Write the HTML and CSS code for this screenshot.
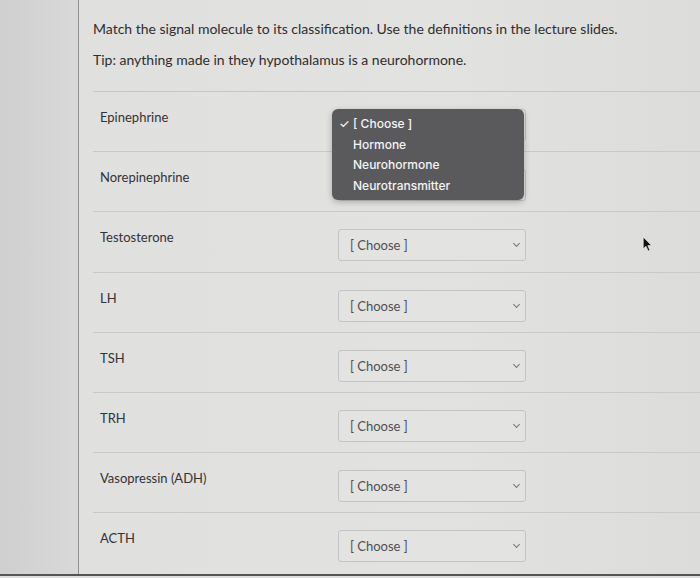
FILE: index.html
```html
<!DOCTYPE html>
<html>
<head>
<meta charset="utf-8">
<link rel="stylesheet" href="styles.css">
</head>
<body>
<div class="page">
  <aside class="sidebar"></aside>
  <main class="main">
    <div class="intro">
      <p class="line">Match the signal molecule to its classification. Use the definitions in the lecture slides.</p>
      <p class="line">Tip: anything made in they hypothalamus is a neurohormone.</p>
    </div>
    <div class="rows">
      <div class="row">
        <div class="label">Epinephrine</div>
        <div class="select-wrap">
          <div class="select"><span>[ Choose ]</span><span class="chev"></span></div>
          <ul class="menu">
            <li class="checked"><span class="check">✓</span>[ Choose ]</li>
            <li>Hormone</li>
            <li>Neurohormone</li>
            <li>Neurotransmitter</li>
          </ul>
        </div>
      </div>
      <div class="row">
        <div class="label">Norepinephrine</div>
        <div class="select-wrap"><div class="select"><span>[ Choose ]</span><span class="chev"></span></div></div>
      </div>
      <div class="row">
        <div class="label">Testosterone</div>
        <div class="select-wrap"><div class="select"><span>[ Choose ]</span><span class="chev"></span></div></div>
        <svg class="cursor" width="11" height="16" viewBox="0 0 10 15"><path d="M1 1 L1 12 L3.6 9.6 L5.6 14 L7.2 13.3 L5.3 9 L8.8 9 Z" fill="#111" stroke="#eee" stroke-width="0.6"/></svg>
      </div>
      <div class="row">
        <div class="label">LH</div>
        <div class="select-wrap"><div class="select"><span>[ Choose ]</span><span class="chev"></span></div></div>
      </div>
      <div class="row">
        <div class="label">TSH</div>
        <div class="select-wrap"><div class="select"><span>[ Choose ]</span><span class="chev"></span></div></div>
      </div>
      <div class="row">
        <div class="label">TRH</div>
        <div class="select-wrap"><div class="select"><span>[ Choose ]</span><span class="chev"></span></div></div>
      </div>
      <div class="row">
        <div class="label">Vasopressin (ADH)</div>
        <div class="select-wrap"><div class="select"><span>[ Choose ]</span><span class="chev"></span></div></div>
      </div>
      <div class="row">
        <div class="label">ACTH</div>
        <div class="select-wrap"><div class="select"><span>[ Choose ]</span><span class="chev"></span></div></div>
      </div>
    </div>
  </main>
</div>
</body>
</html>
```

FILE: styles.css
```css
* { box-sizing: border-box; }
html, body {
  margin: 0;
  padding: 0;
  width: 700px;
  height: 578px;
  overflow: hidden;
  background: #dedede;
  font-family: Lato, "Open Sans", sans-serif;
  color: #2f2f2f;
}
.page {
  display: flex;
  height: 576px;
  border-bottom: 2px solid #555;
}
.sidebar {
  width: 79px;
  flex: none;
  background: linear-gradient(90deg, #cfcfcf, #d9d9d9);
  border-right: 1px solid #8e8e8e;
}
.main {
  flex: 1;
  padding-left: 14px;
  background: linear-gradient(90deg, #e0e0df, #e2e2e1 60%, #dcdcdb);
}
.intro {
  padding-top: 19px;
  height: 92px;
  border-bottom: 1px solid #c6c6c6;
}
.line {
  margin: 0 0 12px;
  font-size: 14px;
  line-height: 19px;
  color: #2e2e2e;
}
.row {
  position: relative;
  display: flex;
  align-items: flex-start;
  height: 60.2px;
  padding-top: 17px;
  border-bottom: 1px solid #c9c9c9;
}
.row:last-child { border-bottom: none; }
.label {
  width: 245px;
  padding-left: 7px;
  padding-top: 0;
  font-size: 13px;
  line-height: 16px;
  color: #333;
}
.select-wrap {
  position: relative;
}
.select {
  width: 188px;
  height: 32px;
  border: 1px solid #c4c4c4;
  border-radius: 3px;
  background: #e3e3e2;
  display: flex;
  align-items: center;
  justify-content: space-between;
  padding: 0 6px 0 11px;
  font-size: 13px;
  color: #505050;
}
.chev {
  width: 5px;
  height: 5px;
  border-right: 1.2px solid #777;
  border-bottom: 1.2px solid #777;
  transform: rotate(45deg);
  margin-top: -3px;
}
.menu {
  position: absolute;
  left: -6px;
  top: 0;
  width: 192px;
  margin: 0;
  padding: 5px 0 4px;
  list-style: none;
  background: #5a5a5c;
  border-radius: 6px;
  box-shadow: 0 2px 6px rgba(0,0,0,0.25);
  font-family: Inter, "Open Sans", sans-serif;
  font-size: 12px;
  font-weight: 500;
  color: #f4f4f4;
  z-index: 2;
}
.menu li {
  height: 20.5px;
  line-height: 20.5px;
  padding-left: 21px;
  position: relative;
}
.check {
  position: absolute;
  left: 7px;
  font-size: 12px;
}
.cursor {
  position: absolute;
  left: 549px;
  top: 24px;
}
```
